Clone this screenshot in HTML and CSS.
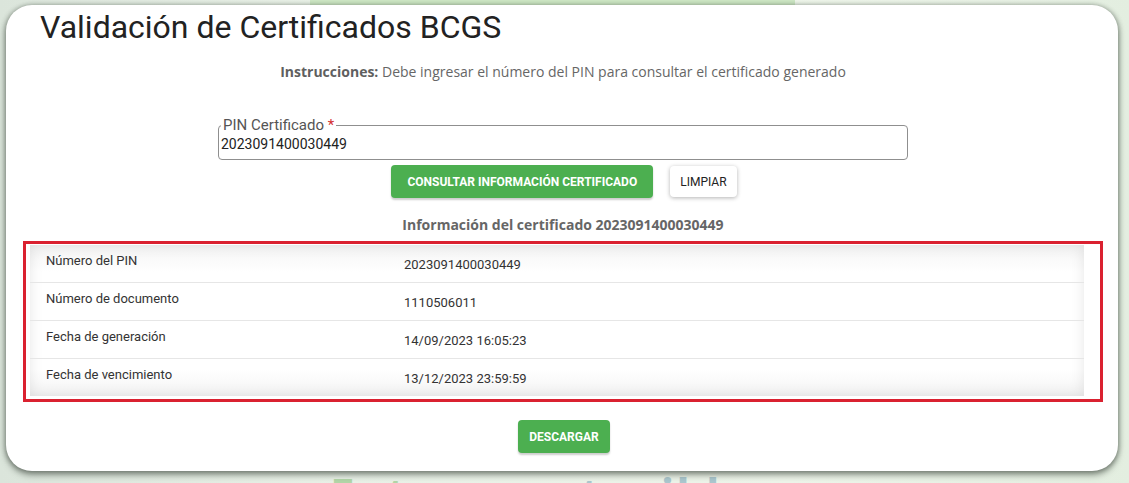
FILE: index.html
```html
<!DOCTYPE html>
<html lang="es">
  <head>
    <meta charset="UTF-8" />
    <meta name="viewport" content="width=device-width, initial-scale=1.0" />
    <title>Validación de Certificados BCGS</title>
    <link rel="stylesheet" href="styles.css">
  </head>
  <body>
    <div class="backdrop">
      <div class="backdrop-band"></div>
      <div class="backdrop-text"><span class="green">Futuro</span> <span class="blue">sostenible</span></div>
    </div>

    <div class="card">
      <h1>Validación de Certificados BCGS</h1>
      <p class="instructions"><b>Instrucciones:</b> Debe ingresar el número del PIN para consultar el certificado generado</p>

      <fieldset class="field">
        <legend>PIN Certificado <span class="req">*</span></legend>
        <input type="text" value="2023091400030449" />
      </fieldset>

      <div class="actions">
        <button class="btn btn-green">CONSULTAR INFORMACIÓN CERTIFICADO</button>
        <button class="btn btn-light">LIMPIAR</button>
      </div>

      <h2 class="info-title">Información del certificado 2023091400030449</h2>

      <div class="highlight">
        <table class="info-table">
          <tr>
            <td class="label">Número del PIN</td>
            <td class="value">2023091400030449</td>
          </tr>
          <tr>
            <td class="label">Número de documento</td>
            <td class="value">1110506011</td>
          </tr>
          <tr>
            <td class="label">Fecha de generación</td>
            <td class="value">14/09/2023 16:05:23</td>
          </tr>
          <tr>
            <td class="label">Fecha de vencimiento</td>
            <td class="value">13/12/2023 23:59:59</td>
          </tr>
        </table>
      </div>

      <div class="download">
        <button class="btn btn-green">DESCARGAR</button>
      </div>
    </div>
  </body>
</html>
```

FILE: styles.css
```css
body {
  margin: 0;
  padding: 0;
  font-family: Roboto, "Liberation Sans", sans-serif;
  background: linear-gradient(90deg, #dbe5db 0%, #e9f1e7 30%, #eef5ea 70%, #e3eee0 100%);
  color: #333;
  height: 483px;
  overflow: hidden;
}
.backdrop {
  position: absolute;
  inset: 0;
  z-index: 0;
  overflow: hidden;
}
.backdrop-band {
  position: absolute;
  left: 310px;
  top: 0;
  width: 485px;
  height: 20px;
  background: #cde6c4;
}
.backdrop-text {
  position: absolute;
  left: 330px;
  top: 464px;
  font-family: "Open Sans", sans-serif;
  font-weight: 700;
  font-size: 44px;
  letter-spacing: 2px;
  white-space: nowrap;
}
.backdrop-text .green {
  color: #b2d6a8;
}
.backdrop-text .blue {
  color: #abc7ce;
}
.card {
  position: relative;
  z-index: 1;
  margin: 5px 11px 0 6px;
  height: 466px;
  box-sizing: border-box;
  background: #fff;
  border-radius: 26px;
  box-shadow: 0 4px 6px rgba(60, 70, 60, 0.55), -2px 0 4px rgba(60, 70, 60, 0.25), 2px 0 4px rgba(60, 70, 60, 0.25);
  padding: 3px 15px 0 17px;
}
h1 {
  margin: 0 0 0 17px;
  font-family: Roboto, sans-serif;
  font-weight: 400;
  font-size: 32px;
  line-height: 38px;
  color: #222;
}
.instructions {
  margin: 16px 0 0;
  text-align: center;
  font-family: "Open Sans", sans-serif;
  font-size: 14px;
  line-height: 20px;
  color: #666;
}
.instructions b {
  color: #5f5f5f;
}
.field {
  margin: 27px auto 0;
  width: 690px;
  box-sizing: border-box;
  border: 1px solid #8f8f8f;
  border-radius: 4px;
  padding: 0 2px 6px;
  height: 43px;
  position: relative;
  top: 8px;
}
.field legend {
  font-size: 15px;
  color: #555;
  padding: 0 2px;
  margin-left: 0;
  line-height: 16px;
}
.field .req {
  color: #d32f2f;
}
.field input {
  border: none;
  outline: none;
  padding: 0;
  font-family: Roboto, sans-serif;
  font-size: 14px;
  color: #222;
  width: 100%;
  background: transparent;
  margin-top: 3px;
}
.actions {
  display: flex;
  justify-content: center;
  gap: 17px;
  margin-top: 13px;
  padding-left: 2px;
}
.btn {
  font-family: Roboto, sans-serif;
  font-weight: 700;
  font-size: 12px;
  height: 33px;
  padding: 0 11px;
  border: none;
  border-radius: 4px;
  cursor: pointer;
}
.btn-green {
  background: #4caf50;
  color: #fff;
  box-shadow: 0 2px 2px rgba(0, 0, 0, 0.2);
}
.actions .btn-green {
  padding: 0 16px;
}
.btn-light {
  background: #fff;
  color: #222;
  font-weight: 400;
  height: 31px;
  margin-top: 1px;
  padding: 0 10px;
  box-shadow: 0 1px 4px rgba(0, 0, 0, 0.3);
}
.info-title {
  margin: 17px 0 0;
  text-align: center;
  font-family: "Open Sans", sans-serif;
  font-weight: 700;
  font-size: 14px;
  line-height: 20px;
  color: #666;
}
.highlight {
  margin: 6px 0 0;
  border: 3px solid #da2130;
  padding: 1px 16px 3px 4px;
}
.info-table {
  width: 100%;
  border-collapse: collapse;
  box-shadow: inset 0 0 14px rgba(0, 0, 0, 0.1);
  background: linear-gradient(180deg, #f4f4f4 0%, #fff 18%, #fff 82%, #f4f4f4 100%);
}
.info-table td {
  padding: 0 16px;
  font-size: 13px;
  color: #333;
  border-bottom: 1px solid #e6e6e6;
  vertical-align: top;
}
.info-table tr:last-child td {
  border-bottom: none;
}
.info-table .label {
  width: 326px;
  padding-top: 8px;
  height: 29px;
}
.info-table .value {
  padding-top: 12px;
  height: 25px;
}
.download {
  display: flex;
  justify-content: center;
  margin-top: 18px;
  padding-left: 2px;
}
```
